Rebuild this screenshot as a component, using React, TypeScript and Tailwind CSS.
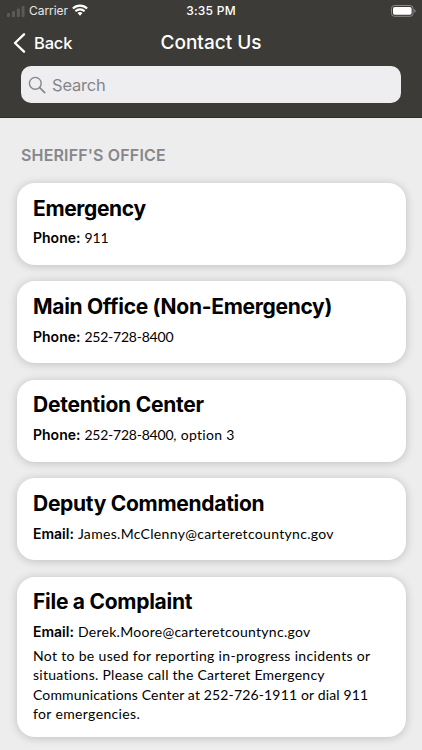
import React from "react";

type Run = { text: string; className: string };

type Contact = {
  title: string;
  titleClass: string;
  label: string;
  value: Run[];
  note?: Run[];
};

const contacts: Contact[] = [
  {
    title: "Emergency",
    titleClass: "tracking-[-0.36px]",
    label: "Phone:",
    value: [{ text: "911", className: "tracking-[-0.1px]" }],
  },
  {
    title: "Main Office (Non-Emergency)",
    titleClass: "tracking-[-0.3px]",
    label: "Phone:",
    value: [{ text: "252-728-8400", className: "tracking-[-0.23px]" }],
  },
  {
    title: "Detention Center",
    titleClass: "tracking-[-0.24px]",
    label: "Phone:",
    value: [
      { text: "252-728-8400", className: "tracking-[-0.23px]" },
      { text: ", option 3", className: "tracking-[0.3px]" },
    ],
  },
  {
    title: "Deputy Commendation",
    titleClass: "tracking-[-0.29px]",
    label: "Email:",
    value: [{ text: "James.McClenny@carteretcountync.gov", className: "tracking-[0.31px]" }],
  },
  {
    title: "File a Complaint",
    titleClass: "tracking-[-0.27px]",
    label: "Email:",
    value: [{ text: "Derek.Moore@carteretcountync.gov", className: "tracking-[0.28px]" }],
    note: [
      { text: "Not to be used for reporting in-progress incidents or", className: "tracking-[0.33px]" },
      { text: "situations. Please call the Carteret Emergency", className: "tracking-[0.27px]" },
      { text: "Communications Center at 252-726-1911 or dial 911", className: "tracking-[0.15px]" },
      { text: "for emergencies.", className: "tracking-[0.36px]" },
    ],
  },
];

function StatusBar() {
  return (
    <div className="relative flex h-[22px] items-center pl-[7px] pr-[7px] text-white">
      <svg width="18" height="11" viewBox="0 0 18 11" fill="#5b5a57">
        <rect x="0" y="7" width="3" height="4" rx="0.8" />
        <rect x="5" y="5" width="3" height="6" rx="0.8" />
        <rect x="9.9" y="2.6" width="3" height="8.4" rx="0.8" />
        <rect x="14.6" y="0" width="3" height="11" rx="0.8" />
      </svg>
      <span className="ml-[4px] w-[40px] whitespace-nowrap text-[12px] leading-[22px] tracking-[-0.05px] text-[#e8e8e7]">Carrier</span>
      <svg className="ml-[3px] -mt-[2px]" width="16" height="12" viewBox="0 0 16 12" fill="none" stroke="white" strokeWidth="2.1">
        <path d="M0.9 4.5 A10.2 10.2 0 0 1 15.1 4.5" />
        <path d="M3.4 7.2 A6.6 6.6 0 0 1 12.6 7.2" />
        <path d="M8 11.7 L5.5 9.1 A3.6 3.6 0 0 1 10.5 9.1 Z" fill="white" stroke="none" />
      </svg>
      <span className="absolute inset-x-0 text-center text-[12px] font-medium leading-[22px] tracking-[0.25px]">3:35 PM</span>
      <svg className="ml-auto -mr-[1px]" width="25" height="12" viewBox="0 0 25 12">
        <rect x="0.5" y="0.5" width="21.6" height="10.8" rx="3" fill="none" stroke="#8a8986" />
        <rect x="2" y="2" width="18.6" height="7.8" rx="1.7" fill="white" />
        <path d="M23.2 4 Q24.6 4.5 24.6 5.9 Q24.6 7.3 23.2 7.8 Z" fill="#8a8986" />
      </svg>
    </div>
  );
}

function Header() {
  return (
    <header className="h-[118px] border-b border-[#2f2e2b] bg-[#3c3b37]">
      <StatusBar />
      <div className="relative flex h-[44px] items-center pl-[13px] text-white">
        <svg className="-mt-[2px]" width="14" height="20" viewBox="0 0 14 20" fill="none" stroke="white" strokeWidth="2.3" strokeLinecap="round" strokeLinejoin="round">
          <path d="M11 1.3 L2 10 L11 18.7" />
        </svg>
        <span className="-mt-[2px] ml-[7px] text-[16.5px] font-medium leading-5 tracking-[-0.2px]">Back</span>
        <h1 className="absolute inset-x-0 top-0 text-center text-[19px] font-medium leading-[42px]">Contact Us</h1>
      </div>
      <div className="mx-[21px] flex h-[37px] items-center rounded-[10px] bg-[#eeeef0] pl-[7px] text-[#85858a]">
        <svg width="18" height="18" viewBox="0 0 18 18" fill="none" stroke="currentColor" strokeWidth="1.4" strokeLinecap="round">
          <circle cx="7.3" cy="7.3" r="5.9" />
          <path d="M11.7 11.7 L16.7 16.7" strokeWidth="1.7" />
        </svg>
        <span className="ml-[6px] pt-px text-[16.5px] leading-[37px] tracking-[-0.2px]">Search</span>
      </div>
    </header>
  );
}

function Card({ contact }: { contact: Contact }) {
  return (
    <section
      className={`rounded-[18px] bg-white pl-[16.5px] pt-[11.7px] text-black shadow-[0_1px_10px_rgba(0,0,0,0.2)] ${
        contact.note ? "h-[160px]" : "h-[82px]"
      }`}
    >
      <h3 className={`whitespace-nowrap text-[21px] font-bold leading-[28px] ${contact.titleClass}`}>{contact.title}</h3>
      <p className="mt-[5.7px] flex h-[20px] gap-[4px] whitespace-nowrap leading-[20px]">
        <span className="text-[14px] font-semibold">{contact.label}</span>
        <span className="font-['Lato',sans-serif] text-[14px]">
          {contact.value.map((run) => (
            <span key={run.text} className={run.className}>
              {run.text}
            </span>
          ))}
        </span>
      </p>
      {contact.note && (
        <div className="mt-[4px] font-['Lato',sans-serif] text-[14px] leading-[19.5px]">
          {contact.note.map((line) => (
            <p key={line.text} className={`whitespace-nowrap ${line.className}`}>
              {line.text}
            </p>
          ))}
        </div>
      )}
    </section>
  );
}

export default function App() {
  return (
    <div className="h-[750px] w-[422px] overflow-hidden bg-[#ededed] font-['Inter',sans-serif]">
      <Header />
      <main className="pl-[16.5px] pr-[16.5px]">
        <h2 className="flex h-[65px] items-end pb-[18px] pl-[4.5px] text-[16px] font-semibold leading-[20px] tracking-[0.15px] text-[#87878b]">
          SHERIFF'S OFFICE
        </h2>
        <div className="flex flex-col gap-[16.4px]">
          {contacts.map((contact) => (
            <Card key={contact.title} contact={contact} />
          ))}
        </div>
      </main>
    </div>
  );
}
